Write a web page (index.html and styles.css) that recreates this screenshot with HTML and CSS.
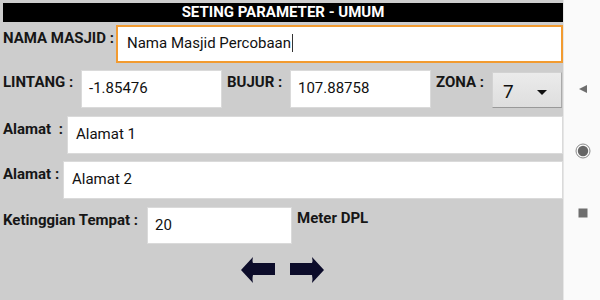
FILE: index.html
```html
<!DOCTYPE html>
<html>
<head>
    <title>Seting Parameter - Umum</title>
    <link rel="stylesheet" href="styles.css">
</head>
<body>
    <div class="screen">
        <div class="panel">
            <div class="title">SETING PARAMETER - UMUM</div>

            <div class="row row-nama">
                <span class="lbl lbl-nama">NAMA MASJID :</span>
                <div class="field field-focus">Nama Masjid Percobaan<span class="caret"></span></div>
            </div>

            <div class="row row-koord">
                <span class="lbl lbl-lintang">LINTANG :</span>
                <div class="field field-num">-1.85476</div>
                <span class="lbl lbl-bujur">BUJUR :</span>
                <div class="field field-num">107.88758</div>
                <span class="lbl lbl-zona">ZONA :</span>
                <div class="spinner">
                    <span class="spinner-val">7</span>
                    <span class="spinner-arrow"></span>
                </div>
            </div>

            <div class="row row-alamat1">
                <span class="lbl lbl-alamat1">Alamat&nbsp; :</span>
                <div class="field field-wide">Alamat 1</div>
            </div>

            <div class="row row-alamat2">
                <span class="lbl lbl-alamat2">Alamat :</span>
                <div class="field field-wide">Alamat 2</div>
            </div>

            <div class="row row-tinggi">
                <span class="lbl lbl-tinggi">Ketinggian Tempat :</span>
                <div class="field field-tinggi">20</div>
                <span class="lbl lbl-unit">Meter DPL</span>
            </div>

            <div class="nav-arrows">
                <a class="arrow">
                    <svg width="34" height="26" viewBox="0 0 34 26">
                        <path d="M0 13 L12 0 Q11 4 12 6 L34 6 L34 18 L12 18 Q11 22 12 26 Z" fill="#0c0c2a"/>
                    </svg>
                </a>
                <a class="arrow">
                    <svg width="34" height="26" viewBox="0 0 34 26">
                        <path d="M34 13 L22 0 Q23 4 22 6 L0 6 L0 18 L22 18 Q23 22 22 26 Z" fill="#0c0c2a"/>
                    </svg>
                </a>
            </div>
        </div>

        <!-- android system bar -->
        <div class="sysbar">
            <svg class="sys-back" width="10" height="10" viewBox="0 0 10 10">
                <path d="M1 5 L9 1 L9 9 Z" fill="#6e6e6e"/>
            </svg>
            <svg class="sys-home" width="16" height="16" viewBox="0 0 16 16">
                <circle cx="8" cy="8" r="7" fill="none" stroke="#8a8a8a" stroke-width="1"/>
                <circle cx="8" cy="8" r="5.2" fill="#666"/>
            </svg>
            <svg class="sys-recent" width="10" height="10" viewBox="0 0 10 10">
                <rect x="0.5" y="0.5" width="9" height="9" fill="#6e6e6e"/>
            </svg>
        </div>
    </div>
</body>
</html>
```

FILE: styles.css
```css
body, html {
    margin: 0;
    padding: 0;
    width: 600px;
    height: 300px;
    overflow: hidden;
    font-family: Roboto, "Liberation Sans", sans-serif;
} .screen {
    display: flex;
    width: 600px;
    height: 300px;
} .panel {
    width: 560px;
    padding: 3px 0 0 3px;
    background-color: #cdcdcd;
    display: flex;
    flex-direction: column;
} .title {
    height: 19px;
    line-height: 19px;
    background-color: #000;
    color: #fff;
    font-weight: bold;
    font-size: 15px;
    text-align: center;
} .row {
    display: flex;
    align-items: flex-start;
    margin-top: 7px;
} .row-nama {
    margin-top: 3px;
} .row-alamat1, .row-tinggi {
    margin-top: 8px;
} .lbl {
    font-size: 15px;
    font-weight: bold;
    line-height: 18px;
    padding-top: 4px;
    color: #161616;
    white-space: nowrap;
    box-sizing: border-box;
} .lbl-nama {
    width: 113px;
} .lbl-lintang {
    width: 78px;
    padding-top: 3px;
} .lbl-bujur {
    width: 68px;
    padding-left: 5px;
    padding-top: 3px;
} .lbl-zona {
    width: 61px;
    padding-left: 5px;
    padding-top: 3px;
} .lbl-alamat1 {
    width: 64px;
} .lbl-alamat2 {
    width: 60px;
} .lbl-tinggi {
    width: 144px;
} .lbl-unit {
    padding-left: 5px;
    padding-top: 2px;
} .field {
    height: 38px;
    box-sizing: border-box;
    background-color: #fff;
    border: 1px solid #dadada;
    font-size: 15px;
    line-height: 18px;
    padding: 8px 0 0 8px;
    color: #111;
    white-space: nowrap;
} .field-focus {
    width: 447px;
    border: 2px solid #f29b30;
    padding: 7px 0 0 9px;
} .caret {
    display: inline-block;
    width: 1px;
    height: 18px;
    background-color: #333;
    vertical-align: top;
    margin-left: 1px;
} .field-num {
    width: 141px;
    padding-left: 7px;
} .field-wide {
    flex: 1;
} .field-tinggi {
    width: 145px;
    height: 37px;
    padding-left: 7px;
} .spinner {
    width: 70px;
    height: 36px;
    margin-top: 2px;
    box-sizing: border-box;
    background: linear-gradient(#ebebeb, #dedede);
    border: 1px solid #d2d2d2;
    border-right-color: #aaa;
    border-bottom-color: #999;
    display: flex;
    align-items: center;
    padding-left: 10px;
} .spinner-val {
    font-size: 19px;
    color: #111;
    width: 34px;
    padding-top: 3px;
} .spinner-arrow {
    width: 0;
    height: 0;
    border-left: 5px solid transparent;
    border-right: 5px solid transparent;
    border-top: 5px solid #111;
    margin-top: 4px;
} .nav-arrows {
    display: flex;
    justify-content: center;
    gap: 15px;
    margin-top: 13px;
    padding-right: 2px;
} .arrow {
    display: block;
    width: 34px;
    height: 26px;
    cursor: pointer;
} .sysbar {
    width: 37px;
    background-color: #fafafa;
    border-left: 1px solid #e6e6e6;
    box-sizing: border-box;
    position: relative;
} .sysbar svg {
    position: absolute;
} .sys-back {
    left: 14px;
    top: 84px;
} .sys-home {
    left: 11px;
    top: 143px;
} .sys-recent {
    left: 14px;
    top: 208px;
}
```
